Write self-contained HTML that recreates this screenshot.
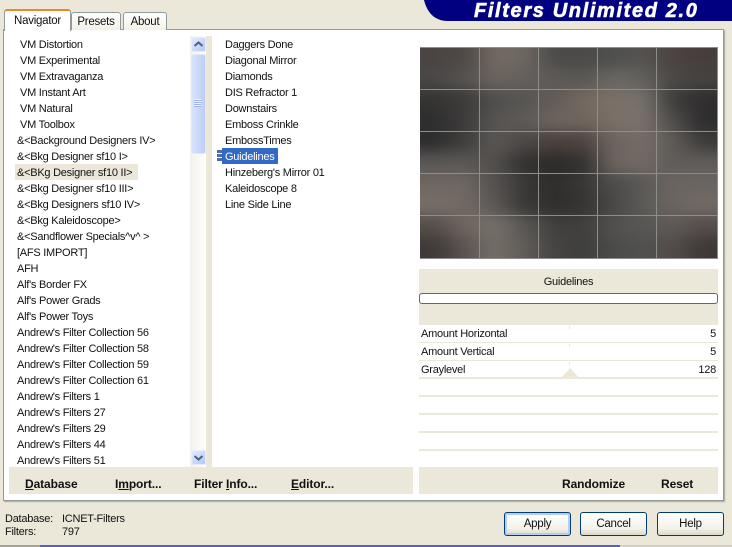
<!DOCTYPE html>
<html><head><meta charset="utf-8"><style>
html,body{margin:0;padding:0}
body{width:732px;height:547px;background:#ebe8d9;position:relative;overflow:hidden;font-family:"Liberation Sans",sans-serif;font-size:11px;letter-spacing:-.25px;color:#111}
div,span.a{position:absolute;white-space:nowrap}
.l div{height:16px;line-height:16px;left:0}
.b{font-weight:bold;font-size:12px;line-height:14px;letter-spacing:-.1px}
.r{background:#fff;left:419px;width:299px}
.btn{top:512px;width:65px;height:22px;border:1px solid #003c74;border-radius:3px;background:linear-gradient(#fff,#f3f2ea 70%,#dcd8ca);text-align:center;line-height:22px;font-size:11.5px}
.t{background:#ebe8d9;width:1px;height:3px}
.pv div{left:-30px;width:358px}
</style></head><body>

<!-- banner -->
<svg style="position:absolute;left:420px;top:0" width="312" height="22"><path d="M4 0H312V21H28C14 21 7 12 4 0Z" fill="#000080"/></svg>
<div style="left:474px;top:0;color:#fff;font:italic bold 20px/22px 'Liberation Sans',sans-serif;letter-spacing:1.64px;-webkit-text-stroke:.6px #fff">Filters Unlimited 2.0</div>

<!-- panel -->
<div style="left:3px;top:29px;width:719px;height:470px;background:#fff;border:1px solid #919b9c;box-shadow:1px 1px 1px #aca899"></div>

<!-- tabs -->
<div style="left:71px;top:12px;width:48px;height:17px;border:1px solid #919b9c;border-bottom:0;border-radius:3px 3px 0 0;background:linear-gradient(#fff,#f3f1e6);text-align:center;line-height:18px;font-size:11.5px">Presets</div>
<div style="left:123px;top:12px;width:42px;height:17px;border:1px solid #919b9c;border-bottom:0;border-radius:3px 3px 0 0;background:linear-gradient(#fff,#f3f1e6);text-align:center;line-height:18px;font-size:11.5px">About</div>
<div style="left:4px;top:9px;width:65px;height:20px;background:#fff;border:1px solid #919b9c;border-bottom:0;border-top:2px solid #e68b2c;border-radius:3px 3px 0 0;text-align:center;line-height:20px;font-size:11.5px">Navigator</div>

<!-- left list -->
<div style="left:15px;top:164px;width:123px;height:16px;background:#ebe8d9"></div>
<div class="l" style="left:17px;top:37px;width:170px;height:432px">
<div style="top:0;left:3px">VM Distortion</div>
<div style="top:16px;left:3px">VM Experimental</div>
<div style="top:32px;left:3px">VM Extravaganza</div>
<div style="top:48px;left:3px">VM Instant Art</div>
<div style="top:64px;left:3px">VM Natural</div>
<div style="top:80px;left:3px">VM Toolbox</div>
<div style="top:96px">&amp;&lt;Background Designers IV&gt;</div>
<div style="top:112px">&amp;&lt;Bkg Designer sf10 I&gt;</div>
<div style="top:128px">&amp;&lt;BKg Designer sf10 II&gt;</div>
<div style="top:144px">&amp;&lt;Bkg Designer sf10 III&gt;</div>
<div style="top:160px">&amp;&lt;Bkg Designers sf10 IV&gt;</div>
<div style="top:176px">&amp;&lt;Bkg Kaleidoscope&gt;</div>
<div style="top:192px">&amp;&lt;Sandflower Specials^v^ &gt;</div>
<div style="top:208px">[AFS IMPORT]</div>
<div style="top:224px">AFH</div>
<div style="top:240px">Alf's Border FX</div>
<div style="top:256px">Alf's Power Grads</div>
<div style="top:272px">Alf's Power Toys</div>
<div style="top:288px">Andrew's Filter Collection 56</div>
<div style="top:304px">Andrew's Filter Collection 58</div>
<div style="top:320px">Andrew's Filter Collection 59</div>
<div style="top:336px">Andrew's Filter Collection 61</div>
<div style="top:352px">Andrew's Filters 1</div>
<div style="top:368px">Andrew's Filters 27</div>
<div style="top:384px">Andrew's Filters 29</div>
<div style="top:400px">Andrew's Filters 44</div>
<div style="top:416px">Andrew's Filters 51</div>
</div>

<!-- scrollbar -->
<div style="left:190px;top:36px;width:16px;height:431px;background:linear-gradient(90deg,#f3f1ec,#fefefe)"></div>
<div style="left:191px;top:37px;width:13px;height:13px;background:linear-gradient(135deg,#e4ecfd,#b4c8f6);border:1px solid #e6eefc;border-radius:2px"></div>
<svg style="position:absolute;left:191px;top:38px" width="15" height="13"><path d="M3.5 8L7.5 4.5L11.5 8" fill="none" stroke="#4d6185" stroke-width="2"/></svg>
<div style="left:191px;top:54px;width:13px;height:98px;background:linear-gradient(90deg,#d8e3fc,#c8d6f9 60%,#bccdf5);border:1px solid #e2ebfd;border-radius:2px"></div>
<div style="left:194px;top:99px;width:7px;height:1px;background:#eef4fe;box-shadow:0 2px #eef4fe,0 4px #eef4fe,0 6px #eef4fe,0 1px #9db3e8,0 3px #9db3e8,0 5px #9db3e8,0 7px #9db3e8"></div>
<div style="left:191px;top:450px;width:13px;height:13px;background:linear-gradient(135deg,#e4ecfd,#b4c8f6);border:1px solid #e6eefc;border-radius:2px"></div>
<svg style="position:absolute;left:191px;top:451px" width="15" height="13"><path d="M3.5 5L7.5 8.5L11.5 5" fill="none" stroke="#4d6185" stroke-width="2"/></svg>

<!-- divider -->
<div style="left:206px;top:36px;width:6px;height:431px;background:#ebe8d9"></div>

<!-- middle list -->
<div style="left:222px;top:148px;width:56px;height:16px;background:#316ac5"></div>
<div style="left:217px;top:150px;width:5px;height:3px;background:#4e6ca8;box-shadow:0 4px #4e6ca8,0 8px #4e6ca8"></div>
<div class="l" style="left:225px;top:37px;width:185px;height:200px">
<div style="top:0">Daggers Done</div>
<div style="top:16px">Diagonal Mirror</div>
<div style="top:32px">Diamonds</div>
<div style="top:48px">DIS Refractor 1</div>
<div style="top:64px">Downstairs</div>
<div style="top:80px">Emboss Crinkle</div>
<div style="top:96px">EmbossTimes</div>
<div style="top:112px;color:#fff">Guidelines</div>
<div style="top:128px">Hinzeberg's Mirror 01</div>
<div style="top:144px">Kaleidoscope 8</div>
<div style="top:160px">Line Side Line</div>
</div>

<!-- preview -->
<div style="left:420px;top:47px;width:298px;height:212px;overflow:hidden;background:#555250">
<div class="pv" style="left:0;top:0;width:298px;height:212px;filter:blur(7px)">
<div style="top:-30px;height:51px;background:linear-gradient(90deg,#4a4443 45px,#4f4845 75px,#726962 104px,#6f6862 134px,#4c4a49 164px,#4a4a48 194px,#4f4f4d 223px,#555351 253px,#4b4340 283px,#463e3c 313px)"></div>
<div style="top:21px;height:22px;background:linear-gradient(90deg,#4a4846 45px,#555250 75px,#6b645f 104px,#64605b 134px,#5d5a57 164px,#5a5653 194px,#6a6663 223px,#62605c 253px,#4a4745 283px,#45423f 313px)"></div>
<div style="top:42px;height:22px;background:linear-gradient(90deg,#353433 45px,#3d3b3a 75px,#504e4c 104px,#575552 134px,#615b57 164px,#74695f 194px,#7b7068 223px,#75706b 253px,#3f3d3c 283px,#302e2e 313px)"></div>
<div style="top:63px;height:22px;background:linear-gradient(90deg,#2f2e2e 45px,#3e3c3b 75px,#565351 104px,#5d5a57 134px,#6d645e 164px,#6f655e 194px,#7a7068 223px,#7a716c 253px,#4e4c4a 283px,#2e2d2d 313px)"></div>
<div style="top:84px;height:22px;background:linear-gradient(90deg,#2e2d2d 45px,#3f3e3d 75px,#5a5754 104px,#4b4846 134px,#4a403d 164px,#4c4441 194px,#6d645f 223px,#756b66 253px,#5f5b57 283px,#3d3b3a 313px)"></div>
<div style="top:105px;height:22px;background:linear-gradient(90deg,#5a5856 45px,#5a5856 75px,#524f4d 104px,#343130 134px,#2d2b2a 164px,#343231 194px,#6c645f 223px,#736a65 253px,#5f5b58 283px,#605c59 313px)"></div>
<div style="top:126px;height:22px;background:linear-gradient(90deg,#6e6762 45px,#6e6762 75px,#55514f 104px,#3a3837 134px,#2e2d2c 164px,#383736 194px,#4c4c4b 223px,#5b5956 253px,#6a6561 283px,#6a6561 313px)"></div>
<div style="top:147px;height:22px;background:linear-gradient(90deg,#766e68 45px,#716963 75px,#5c5855 104px,#3a3938 134px,#2f2e2d 164px,#353433 194px,#484746 223px,#5c5a57 253px,#6b6560 283px,#716964 313px)"></div>
<div style="top:168px;height:22px;background:linear-gradient(90deg,#554e4a 45px,#6f665f 75px,#76706a 104px,#5a5754 134px,#413f3d 164px,#403f3d 194px,#52514f 223px,#585654 253px,#5e5a56 283px,#554e4b 313px)"></div>
<div style="top:189px;height:53px;background:linear-gradient(90deg,#3f3938 45px,#5a5552 75px,#756e68 104px,#605c58 134px,#464442 164px,#3e3e3d 194px,#4b4b4a 223px,#515150 253px,#524c49 283px,#3e3837 313px)"></div>
</div>
</div>
<svg style="position:absolute;left:420px;top:47px" width="298" height="212">
<g fill="#8d8d8a" shape-rendering="crispEdges">
<rect x="0" y="0" width="298" height="1"/><rect x="0" y="211" width="298" height="1"/><rect x="297" y="0" width="1" height="212"/>
<rect x="59" y="0" width="1" height="212"/><rect x="118" y="0" width="1" height="212"/><rect x="177" y="0" width="1" height="212"/><rect x="236" y="0" width="1" height="212"/>
<rect x="0" y="42" width="298" height="1"/><rect x="0" y="84" width="298" height="1"/><rect x="0" y="126" width="298" height="1"/><rect x="0" y="168" width="298" height="1"/>
</g></svg>

<!-- right controls -->
<div style="left:419px;top:269px;width:299px;height:56px;background:#ebe8d9"></div>
<div style="left:419px;top:274px;width:299px;text-align:center;line-height:16px">Guidelines</div>
<div style="left:419px;top:293px;width:297px;height:9px;background:#fff;border:1px solid #666;border-radius:3px"></div>

<div class="r" style="top:325px;height:17px"></div>
<div class="r" style="top:343px;height:17px"></div>
<div class="r" style="top:361px;height:16px"></div>
<div class="r" style="top:379px;height:16px"></div>
<div class="r" style="top:397px;height:16px"></div>
<div class="r" style="top:415px;height:16px"></div>
<div class="r" style="top:433px;height:16px"></div>
<div class="r" style="top:451px;height:16px"></div>
<div style="left:419px;top:342px;width:299px;height:1px;background:#ebe8d9"></div>
<div style="left:419px;top:360px;width:299px;height:1px;background:#ebe8d9"></div>
<div style="left:419px;top:377px;width:299px;height:2px;background:#ebe8d9"></div>
<div style="left:419px;top:395px;width:299px;height:2px;background:#ebe8d9"></div>
<div style="left:419px;top:413px;width:299px;height:2px;background:#ebe8d9"></div>
<div style="left:419px;top:431px;width:299px;height:2px;background:#ebe8d9"></div>
<div style="left:419px;top:449px;width:299px;height:2px;background:#ebe8d9"></div>

<div class="t" style="left:569px;top:326px"></div>
<div class="t" style="left:569px;top:344px"></div>
<div class="t" style="left:569px;top:362px"></div>
<svg style="position:absolute;left:561px;top:368px" width="18" height="10"><path d="M0 10L9 0L18 10Z" fill="#ebe8d9"/></svg>

<div style="left:421px;top:326px;line-height:17px">Amount Horizontal</div>
<div style="left:421px;top:344px;line-height:17px">Amount Vertical</div>
<div style="left:421px;top:362px;line-height:17px">Graylevel</div>
<div style="right:16px;top:326px;line-height:17px">5</div>
<div style="right:16px;top:344px;line-height:17px">5</div>
<div style="right:16px;top:362px;line-height:17px">128</div>

<!-- bottom bars -->
<div style="left:9px;top:467px;width:404px;height:27px;background:#ebe8d9"></div>
<div style="left:419px;top:467px;width:299px;height:27px;background:#ebe8d9"></div>
<div class="b" style="left:25px;top:477px"><u>D</u>atabase</div>
<div class="b" style="left:115px;top:477px">I<u>m</u>port...</div>
<div class="b" style="left:194px;top:477px">Filter <u>I</u>nfo...</div>
<div class="b" style="left:291px;top:477px"><u>E</u>ditor...</div>
<div class="b" style="left:562px;top:477px">Randomize</div>
<div class="b" style="left:661px;top:477px">Reset</div>

<!-- status -->
<div style="left:5px;top:512px;line-height:14px">Database:</div>
<div style="left:62px;top:512px;line-height:14px">ICNET-Filters</div>
<div style="left:5px;top:525px;line-height:14px">Filters:</div>
<div style="left:62px;top:525px;line-height:14px">797</div>

<!-- buttons -->
<div class="btn" style="left:504px;box-shadow:inset 0 0 0 2px #b5cdf1">Apply</div>
<div class="btn" style="left:580px">Cancel</div>
<div class="btn" style="left:657px">Help</div>

<!-- bottom strip -->
<div style="left:0;top:545px;width:40px;height:2px;background:#a5a297"></div>
<div style="left:40px;top:545px;width:580px;height:2px;background:#5a5fb8"></div>
<div style="left:620px;top:545px;width:112px;height:2px;background:#d4d1c4"></div>
</body></html>
